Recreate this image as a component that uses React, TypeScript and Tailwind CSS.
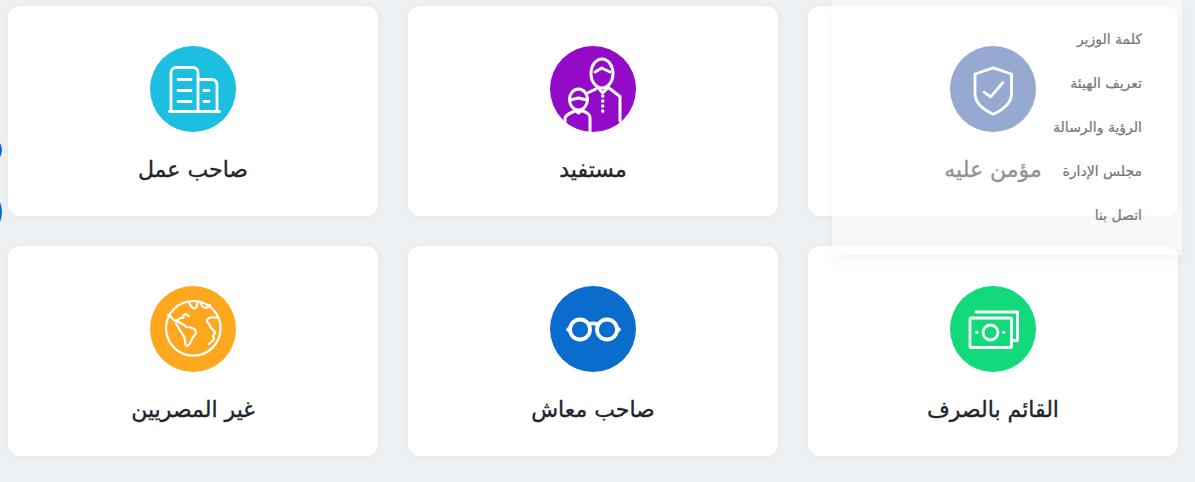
const font = { fontFamily: '"DejaVu Sans", "Noto Sans", sans-serif' };

const menuItems = ['كلمة الوزير', 'تعريف الهيئة', 'الرؤية والرسالة', 'مجلس الإدارة', 'اتصل بنا'];

function Building() {
  return (
    <g strokeWidth="2.8">
      <path d="M21 65V26.500a5 5 0 0 1 5-5H43a5 5 0 0 1 5 5V65" />
      <path d="M48 33.500h14a5 5 0 0 1 5 5V65" />
      <path d="M19.500 65.500h50" />
      <path d="M28 33.500h13M28 44.500h13M28 55.500h13M54 44.500h5M54 55.500h5" />
    </g>
  );
}

function People() {
  return (
    <g strokeWidth="3">
      <ellipse cx="52" cy="27.500" rx="11" ry="14.500" />
      <path d="M45 26l6.700-4 8.300 4" />
      <path d="M48 41.500l4.700 5.500 5.600-5.500L70 50.500V75" />
      <path d="M38.500 46.500l7.200-3.400" />
      <path d="M52.700 50v.1M52.700 55v.1M52.700 60v.1M52.700 65v.1" strokeWidth="3.600" />
      <ellipse cx="28.500" cy="53.500" rx="9" ry="10.500" />
      <path d="M20 54l8.500-2 8.500 2" />
      <path d="M25 64l3.500 3 4-3" />
      <path d="M15 76v-3.500c0-3 4-5 10-7.500M33 65c6 2.500 7 4 7 7.500V86" />
    </g>
  );
}

function Globe() {
  return (
    <g strokeWidth="2.200">
      <circle cx="43.300" cy="42.300" r="27.300" />
      <path d="M18 29c3 1 4 4 7 6 2 1 3 0 4-2 1-2 3-1 4-1 1-2 0-4 2-4 2 0 2 2 4 2" />
      <path d="M26 34c1 2 3 2 6 4 2 1 3 1 4 3 2 0 4 0 6 1 3 1 4 3 4 5-1 3-3 3-4 6-1 3-2 6-5 7-2 0-2-3-2-6 0-4-2-5-4-8-2-3-3-6-5-8" />
      <path d="M39 16c1 3 2 5 4 6 2 1 4-1 4-3 0-1 1-3 2-3M51 18c1 3 4 5 7 3l2-2" />
      <path d="M68 32c-4-1-7-1-9 0-2 1-3 3-1 5 2 2 2 3 3 5 2 2 4 3 4 5-2 2-2 4-1 6-1 2-3 3-5 5" />
    </g>
  );
}

function Glasses() {
  return (
    <g strokeWidth="3.800">
      <circle cx="30" cy="43.500" r="10" />
      <circle cx="57" cy="43.500" r="10" />
      <path d="M39 38.500c3-1.500 6-1.500 9 0" />
      <path d="M19.500 43.500h-1M67.500 43.500h1" strokeWidth="4.500" />
    </g>
  );
}

function Money() {
  return (
    <g strokeWidth="2.800">
      <rect x="20" y="32" width="41.500" height="29.500" rx="0.500" />
      <path d="M26 26h41.500v28.500H62" />
      <circle cx="40.500" cy="46.500" r="7.500" />
      <path d="M26.500 46.500h.6M53.500 46.500h.6" />
    </g>
  );
}

function Shield() {
  return (
    <g strokeWidth="2.800">
      <path d="M43.300 21.800L25 28v19.500c0 9 8 16 18.300 20.800C53.600 63.500 61.500 56.500 61.500 47.500V28z" />
      <path d="M34.300 46.300l6.400 4.500 12-14" />
    </g>
  );
}

function Card({ title, color, children }: { title: string; color: string; children: React.ReactNode }) {
  return (
    <div className="flex h-[210px] flex-col items-center rounded-[12px] bg-white pt-[40px] shadow-[0_0_10px_rgba(0,0,0,0.04)]">
      <div className={`h-[86px] w-[86px] overflow-hidden rounded-full ${color}`}>
        <svg viewBox="0 0 86 86" width="86" height="86" fill="none" stroke="white" strokeLinecap="round" strokeLinejoin="round">
          {children}
        </svg>
      </div>
      <h3 className="mt-[23px] text-[22px] leading-[30px] font-normal text-[#212529] [-webkit-text-stroke:0.35px_#212529]">{title}</h3>
    </div>
  );
}

export default function App() {
  return (
    <div dir="rtl" style={font} className="relative h-[482px] w-[1195px] overflow-hidden bg-[#eef1f4]">
      <div className="absolute left-[-24px] top-[137px] h-[26px] w-[26px] rounded-full bg-[#0a6ccd]" />
      <div className="absolute left-[-50px] top-[186px] h-[52px] w-[52px] rounded-full bg-[#0a6ccd]" />

      <div className="grid grid-cols-[370px_370px_370px] gap-x-[30px] gap-y-[30px] pt-[6px] pr-[17px]">
        <Card title="مؤمن عليه" color="bg-[#2a53a3]"><Shield /></Card>
        <Card title="مستفيد" color="bg-[#930ac8]"><People /></Card>
        <Card title="صاحب عمل" color="bg-[#1cbfdf]"><Building /></Card>
        <Card title="القائم بالصرف" color="bg-[#12d97a]"><Money /></Card>
        <Card title="صاحب معاش" color="bg-[#0a6ccd]"><Glasses /></Card>
        <Card title="غير المصريين" color="bg-[#ffa81e]"><Globe /></Card>
      </div>

      <ul className="absolute left-[832px] top-0 flex h-[255px] w-[350px] flex-col bg-white/50 pt-[17px] pr-[40px] shadow-[0_6px_12px_rgba(0,0,0,0.04)]">
        {menuItems.map((item) => (
          <li key={item} className="h-[44px] text-[14px] leading-[44px] font-normal text-[#73767a] [-webkit-text-stroke:0.2px_#73767a]">{item}</li>
        ))}
      </ul>
    </div>
  );
}
